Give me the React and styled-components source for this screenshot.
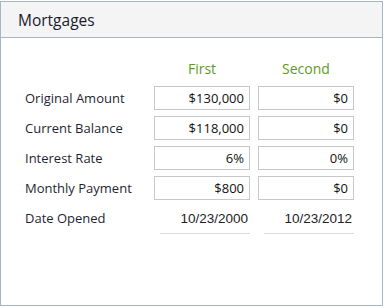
import React from "react";
import styled, { createGlobalStyle } from "styled-components";

const GlobalStyle = createGlobalStyle`
  html, body {
    margin: 0;
    padding: 0;
    background: #fff;
  }
  body {
    font-family: "Open Sans", "DejaVu Sans", sans-serif;
  }
`;

const Panel = styled.section`
  box-sizing: border-box;
  margin-top: 1px;
  width: 383px;
  height: 305px;
  border: 1px solid #a7b6c6;
  background: #fff;
  box-shadow: 0 1px 0 #e4e8ec;
`;

const Header = styled.header`
  box-sizing: border-box;
  height: 36px;
  padding: 0 17px;
  display: flex;
  align-items: center;
  background: #f4f4f4;
  border-bottom: 1px solid #a7b6c6;
  font-size: 15.5px;
  color: #1b1b2e;
`;

const Grid = styled.div`
  display: grid;
  grid-template-columns: 123px 96px 96px;
  grid-auto-rows: 24px;
  column-gap: 8px;
  row-gap: 6px;
  padding: 18px 0 0 22px;
  font-size: 13px;
`;

const ColHead = styled.div`
  display: flex;
  align-items: center;
  justify-content: center;
  color: #5e9a1e;
  font-size: 14px;
`;

const Label = styled.div`
  display: flex;
  align-items: center;
  padding-left: 2px;
  color: #1f1f33;
  white-space: nowrap;
`;

const ValueBox = styled.div`
  box-sizing: border-box;
  display: flex;
  align-items: center;
  justify-content: flex-end;
  padding-right: 5px;
  border: 1px solid #c8c8c8;
  color: #111;
`;

const DateCell = styled.div`
  box-sizing: border-box;
  height: 28px;
  margin-left: 6px;
  display: flex;
  align-items: center;
  justify-content: flex-end;
  padding: 0 2px 3px 0;
  border-bottom: 1px solid #dcdcdc;
  font-family: "Liberation Sans", Arial, sans-serif;
  font-size: 13.5px;
  color: #222;
`;

const rows = [
  ["Original Amount", "$130,000", "$0"],
  ["Current Balance", "$118,000", "$0"],
  ["Interest Rate", "6%", "0%"],
  ["Monthly Payment", "$800", "$0"],
];

export default function App() {
  return (
    <>
      <GlobalStyle />
      <Panel>
        <Header>Mortgages</Header>
        <Grid>
          <div />
          <ColHead>First</ColHead>
          <ColHead>Second</ColHead>
          {rows.map(([label, first, second]) => (
            <React.Fragment key={label}>
              <Label>{label}</Label>
              <ValueBox>{first}</ValueBox>
              <ValueBox>{second}</ValueBox>
            </React.Fragment>
          ))}
          <Label>Date Opened</Label>
          <DateCell>10/23/2000</DateCell>
          <DateCell>10/23/2012</DateCell>
        </Grid>
      </Panel>
    </>
  );
}
